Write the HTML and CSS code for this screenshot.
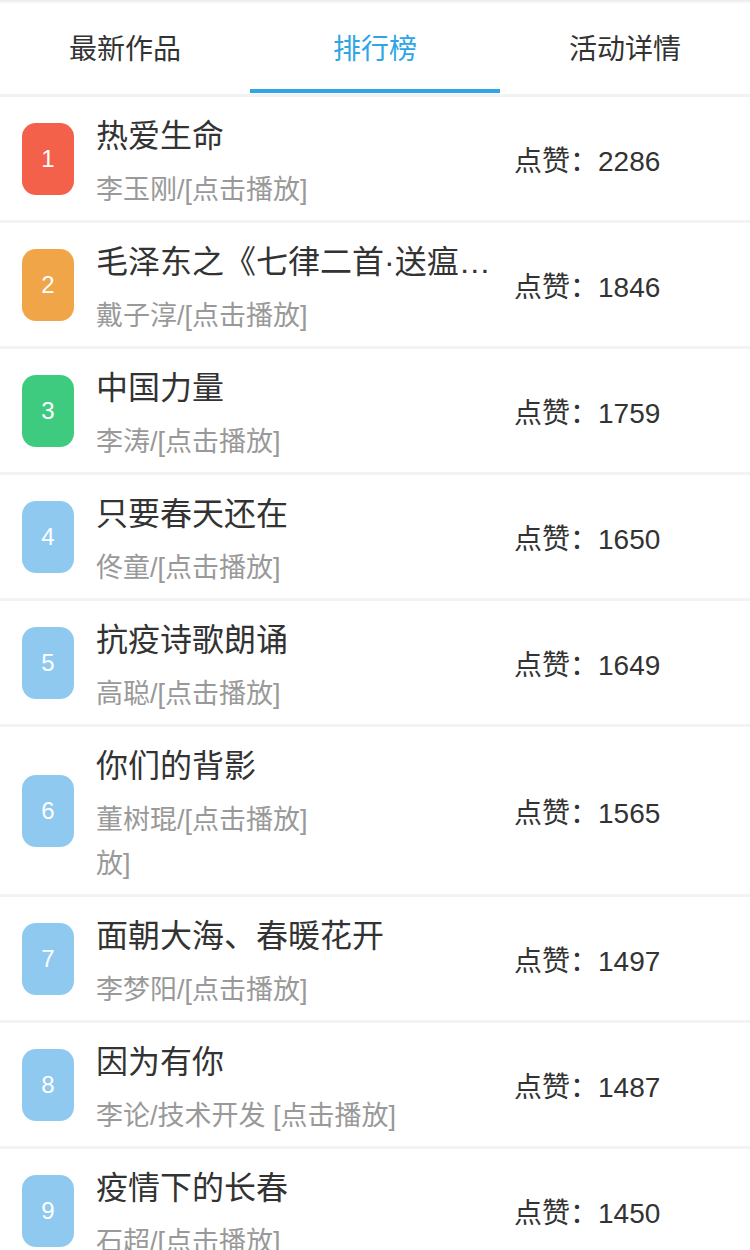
FILE: index.html
```html
<!DOCTYPE html>
<html lang="zh-CN">
    <head>
        <meta charset="UTF-8">
        <link rel="stylesheet" href="styles.css">
    </head>

    <body>
        <div class="top_shade"></div>
        <div class="tabs">
            <div class="tab">最新作品</div>
            <div class="tab active">排行榜</div>
            <div class="tab">活动详情</div>
        </div>

        <div class="rank_list">
            <div class="row">
                <div class="badge red">1</div>
                <div class="info">
                    <p class="title">热爱生命</p>
                    <p class="sub">李玉刚/[点击播放]</p>
                </div>
                <div class="likes">点赞：2286</div>
            </div>
            <div class="row">
                <div class="badge orange">2</div>
                <div class="info">
                    <p class="title">毛泽东之《七律二首·送瘟神》</p>
                    <p class="sub">戴子淳/[点击播放]</p>
                </div>
                <div class="likes">点赞：1846</div>
            </div>
            <div class="row">
                <div class="badge green">3</div>
                <div class="info">
                    <p class="title">中国力量</p>
                    <p class="sub">李涛/[点击播放]</p>
                </div>
                <div class="likes">点赞：1759</div>
            </div>
            <div class="row">
                <div class="badge">4</div>
                <div class="info">
                    <p class="title">只要春天还在</p>
                    <p class="sub">佟童/[点击播放]</p>
                </div>
                <div class="likes">点赞：1650</div>
            </div>
            <div class="row">
                <div class="badge">5</div>
                <div class="info">
                    <p class="title">抗疫诗歌朗诵</p>
                    <p class="sub">高聪/[点击播放]</p>
                </div>
                <div class="likes">点赞：1649</div>
            </div>
            <div class="row">
                <div class="badge">6</div>
                <div class="info">
                    <p class="title">你们的背影</p>
                    <p class="sub">董树琨/[点击播放]<br>放]</p>
                </div>
                <div class="likes">点赞：1565</div>
            </div>
            <div class="row">
                <div class="badge">7</div>
                <div class="info">
                    <p class="title">面朝大海、春暖花开</p>
                    <p class="sub">李梦阳/[点击播放]</p>
                </div>
                <div class="likes">点赞：1497</div>
            </div>
            <div class="row">
                <div class="badge">8</div>
                <div class="info">
                    <p class="title">因为有你</p>
                    <p class="sub">李论/技术开发 [点击播放]</p>
                </div>
                <div class="likes">点赞：1487</div>
            </div>
            <div class="row">
                <div class="badge">9</div>
                <div class="info">
                    <p class="title">疫情下的长春</p>
                    <p class="sub">石超/[点击播放]</p>
                </div>
                <div class="likes">点赞：1450</div>
            </div>
        </div>
    </body>
</html>
```

FILE: styles.css
```css
@charset "UTF-8";
body{
    margin: 0;
    background-color: #fff;
    font-family: "Liberation Sans", "Noto Sans CJK SC", sans-serif;
    color: #333;
}
.top_shade{
    height: 4px;
    background: linear-gradient(#ebebeb, #fff);
}
.tabs{
    display: flex;
    height: 90px;
    border-bottom: 3px solid #f2f2f2;
}
.tab{
    flex: 1;
    display: flex;
    align-items: center;
    justify-content: center;
    font-size: 28px;
    color: #333;
    border-bottom: 4px solid transparent;
    margin-bottom: 1px;
}
.tab.active{
    color: #2ea6e6;
    border-bottom-color: #2ea6e6;
}
.row{
    display: flex;
    align-items: center;
    min-height: 123px;
    border-bottom: 3px solid #f3f3f3;
    padding-left: 22px;
}
.badge{
    width: 52px;
    height: 72px;
    border-radius: 14px;
    background-color: #90c9f0;
    color: #fff;
    font-size: 24px;
    display: flex;
    align-items: center;
    justify-content: center;
    flex-shrink: 0;
}
.badge.red{ background-color: #f4614b; }
.badge.orange{ background-color: #efa548; }
.badge.green{ background-color: #3ecb7f; }
.info{
    width: 398px;
    margin-left: 22px;
    padding: 18px 0 8px;
}
.info p{
    margin: 0;
}
.title{
    font-size: 32px;
    line-height: 42px;
    color: #333;
    white-space: nowrap;
    overflow: hidden;
    text-overflow: ellipsis;
}
.sub{
    font-size: 27px;
    line-height: 44px;
    color: #999;
    margin-top: 11px !important;
}
.likes{
    margin-left: 20px;
    font-size: 28px;
    color: #333;
    white-space: nowrap;
}
```
